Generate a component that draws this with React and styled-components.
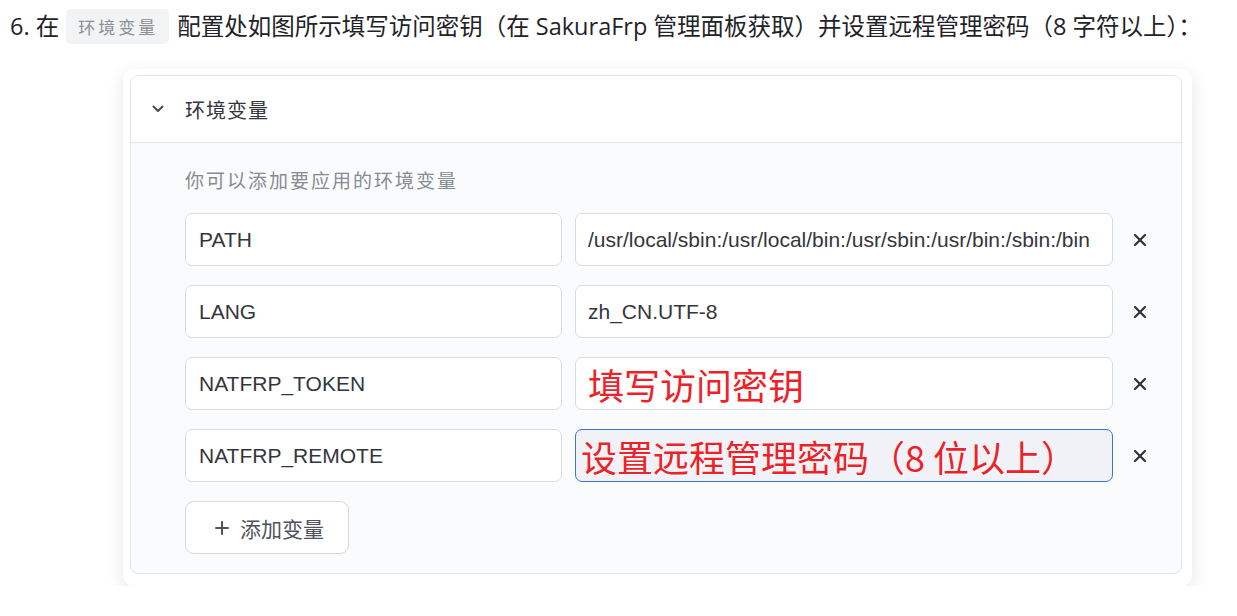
import React from "react";
import styled, { createGlobalStyle } from "styled-components";

const Global = createGlobalStyle`
  html, body { margin: 0; padding: 0; background: #ffffff; }
  body { font-family: "Open Sans", "Noto Sans CJK SC", sans-serif; color: #24292f; }
`;

const Page = styled.div`
  padding: 9px 0 0 10px;
  width: 1237px;
  box-sizing: border-box;
`;

const Step = styled.p`
  margin: 0;
  height: 35px;
  line-height: 35px;
  font-size: 23.5px;
  color: #1f2328;
  white-space: nowrap;
`;

const Chip = styled.span`
  display: inline-block;
  height: 35px;
  line-height: 35px;
  padding: 0 11px 0 12px;
  margin: 0 8px 0 7px;
  background: #f1f3f5;
  border-radius: 5px;
  font-size: 17px;
  letter-spacing: 3px;
  color: #8b9098;
  vertical-align: top;
  font-family: "Noto Sans CJK SC", sans-serif;
`;

const Card = styled.div`
  margin: 25px 0 0 113px;
  width: 1069px;
  box-sizing: border-box;
  padding: 6px 10px 12px 7px;
  background: #fff;
  border-radius: 10px;
  box-shadow: 0 5px 18px rgba(0, 0, 0, 0.1);
`;

const Panel = styled.div`
  border: 1px solid #e4e5e9;
  border-radius: 8px;
  overflow: hidden;
  background: #fafbfd;
`;

const Header = styled.div`
  height: 66px;
  display: flex;
  align-items: center;
  gap: 21px;
  padding-left: 21px;
  background: #fff;
  border-bottom: 1px solid #e4e5e9;
  font-family: "Noto Sans CJK SC", sans-serif;
  font-size: 20px;
  letter-spacing: 1px;
  color: #33363d;
`;

const Body = styled.div`
  padding: 23px 0 19px 54px;
`;

const Desc = styled.div`
  font-family: "Noto Sans CJK SC", sans-serif;
  font-size: 19px;
  letter-spacing: 2px;
  line-height: 28px;
  color: #878b94;
  margin-bottom: 19px;
`;

const Rows = styled.div`
  display: grid;
  grid-template-columns: 377px 538px 28px;
  column-gap: 13px;
  row-gap: 19px;
  align-items: center;
`;

const Field = styled.div`
  height: 53px;
  box-sizing: border-box;
  border: ${(p) => (p.$focused ? "1.5px solid #3d72cf" : "1px solid #d9dbe2")};
  border-radius: 7px;
  background: ${(p) => (p.$focused ? "#f0f2f7" : "#ffffff")};
  display: flex;
  align-items: center;
  padding-left: ${(p) => (p.$pad != null ? p.$pad : 13)}px;
  font-family: "Liberation Sans", Arial, sans-serif;
  font-size: 21px;
  color: #34363c;
  white-space: nowrap;
  overflow: hidden;
`;

const Note = styled.span`
  font-family: "Noto Sans CJK SC", sans-serif;
  font-size: 36px;
  color: #ee2128;
  line-height: 1;
  text-shadow: 0 0 1px #fff, 1px 1px 0 #fff;
`;

const Remove = styled.button`
  width: 28px;
  height: 28px;
  padding: 0;
  border: 0;
  background: transparent;
  display: flex;
  align-items: center;
  justify-content: center;
  color: #2f3137;
  cursor: pointer;
`;

const AddButton = styled.button`
  margin-top: 19px;
  width: 164px;
  height: 53px;
  box-sizing: border-box;
  border: 1px solid #d6d8e0;
  border-radius: 9px;
  background: #fff;
  display: flex;
  align-items: center;
  justify-content: center;
  gap: 11px;
  padding: 0 0 0 5px;
  font-family: "Noto Sans CJK SC", sans-serif;
  font-size: 21px;
  color: #4f535d;
`;

const XIcon = () => (
  <svg width="14" height="14" viewBox="0 0 14 14">
    <path d="M2 2 L12 12 M12 2 L2 12" stroke="currentColor" strokeWidth="2.2" strokeLinecap="round" />
  </svg>
);

const Chevron = () => (
  <svg width="12" height="8" viewBox="0 0 12 8">
    <path d="M1.5 1.5 L6 6 L10.5 1.5" fill="none" stroke="#4a4d55" strokeWidth="2" strokeLinecap="round" strokeLinejoin="round" />
  </svg>
);

const Plus = () => (
  <svg width="14" height="14" viewBox="0 0 14 14">
    <path d="M7 1 V13 M1 7 H13" stroke="#4f535d" strokeWidth="2" strokeLinecap="round" />
  </svg>
);

const rows = [
  { key: "PATH", value: "/usr/local/sbin:/usr/local/bin:/usr/sbin:/usr/bin:/sbin:/bin" },
  { key: "LANG", value: "zh_CN.UTF-8" },
  { key: "NATFRP_TOKEN", note: "填写访问密钥" },
  { key: "NATFRP_REMOTE", note: "设置远程管理密码（8 位以上）", focused: true },
];

export default function App() {
  return (
    <Page>
      <Global />
      <Step>
        6. 在<Chip>环境变量</Chip>配置处如图所示填写访问密钥（在 SakuraFrp 管理面板获取）并设置远程管理密码（8 字符以上）：
      </Step>
      <Card>
        <Panel>
          <Header>
            <Chevron />
            <span>环境变量</span>
          </Header>
          <Body>
            <Desc>你可以添加要应用的环境变量</Desc>
            <Rows>
              {rows.map((r) => (
                <React.Fragment key={r.key}>
                  <Field>{r.key}</Field>
                  <Field $focused={r.focused} $pad={r.focused ? 5 : 12}>
                    {r.note ? <Note>{r.note}</Note> : r.value}
                  </Field>
                  <Remove aria-label="删除">
                    <XIcon />
                  </Remove>
                </React.Fragment>
              ))}
            </Rows>
            <AddButton>
              <Plus />
              <span>添加变量</span>
            </AddButton>
          </Body>
        </Panel>
      </Card>
    </Page>
  );
}
